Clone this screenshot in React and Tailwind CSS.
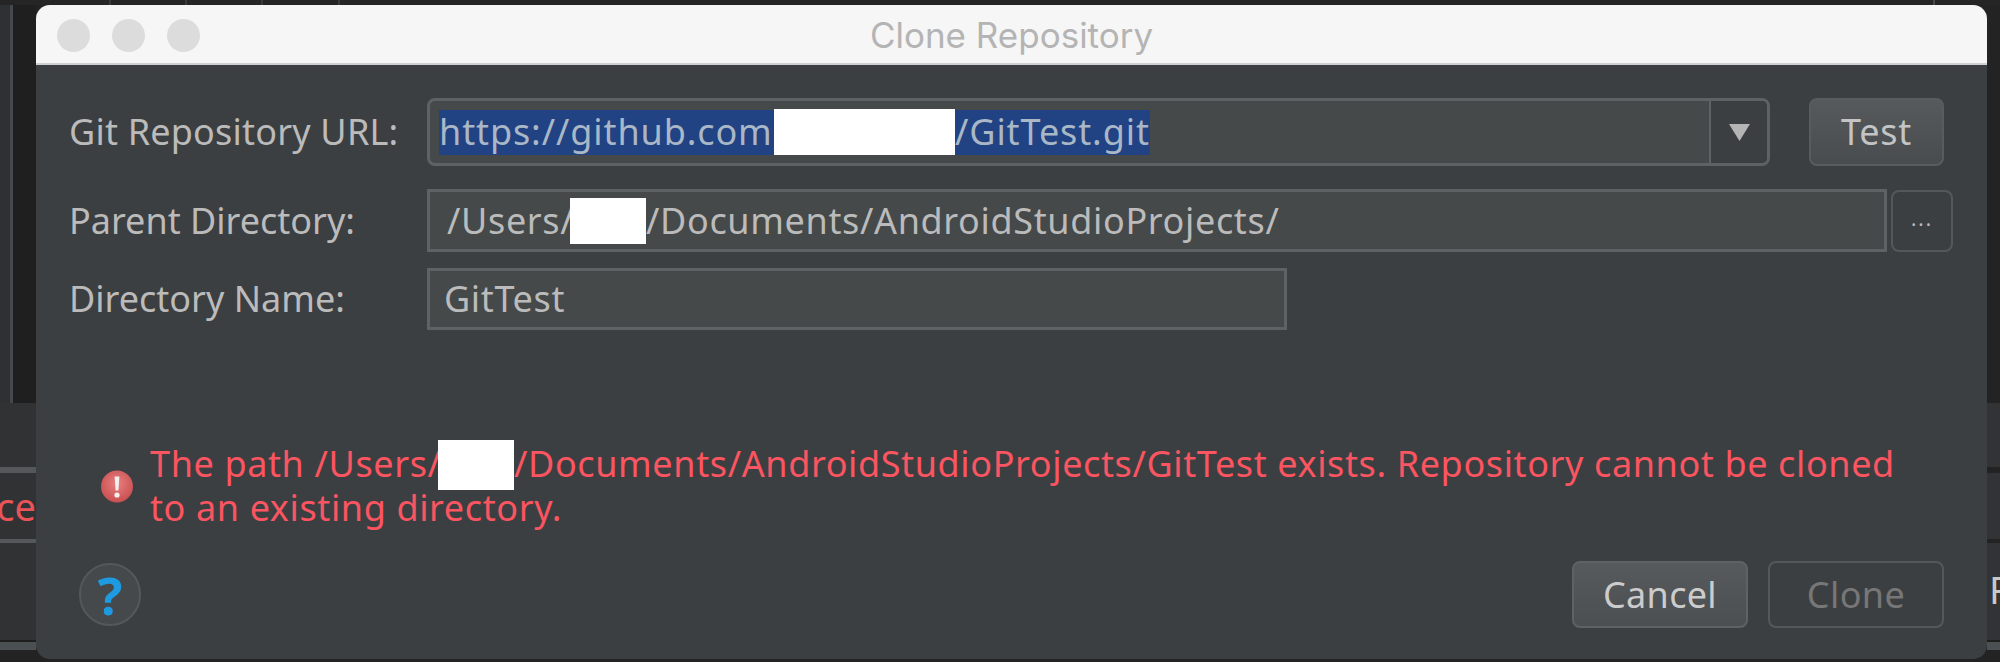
function Side({ left, right, className = "", leftClass = "", rightClass = "" }) {
  return (
    <div className={`flex justify-between shrink-0 ${className}`}>
      <div className={`w-[36px] overflow-hidden flex justify-end items-center ${leftClass}`}>{left}</div>
      <div className={`w-[13px] overflow-hidden flex items-center ${rightClass}`}>{right}</div>
    </div>
  );
}

function Button({ children, className = "" }) {
  return (
    <div className={`flex items-center justify-center rounded-[8px] border-2 ${className}`}>{children}</div>
  );
}

function Backdrop() {
  return (
    <div className="w-[2000px] h-[662px] flex flex-col bg-[#232323] font-['Noto_Sans',sans-serif] text-[38px]">
      <div className="h-[5px] shrink-0 bg-[#252525] flex">
        <div className="ml-[109px] w-[2px] bg-[#3a3a3a]" />
        <div className="ml-[74px] w-[2px] bg-[#3a3a3a]" />
        <div className="ml-[74px] w-[2px] bg-[#3a3a3a]" />
        <div className="ml-[75px] w-[2px] bg-[#3a3a3a]" />
        <div className="ml-[1593px] w-[2px] bg-[#444a4c]" />
      </div>
      <div className="h-[398px] shrink-0 flex justify-between">
        <div className="w-[36px] flex">
          <div className="w-[10px] bg-[#2f3032]" />
          <div className="w-[3px] bg-[#46494b]" />
          <div className="flex-1 bg-[#1f1f1f]" />
        </div>
        <div className="w-[13px] bg-[#232323]" />
      </div>
      <Side className="h-[64px]" leftClass="bg-[#303234]" rightClass="bg-[#313335]" />
      <Side className="h-[6px]" leftClass="bg-[#55585a]" rightClass="bg-[#232323]" />
      <Side className="h-[66px]" leftClass="bg-[#303234]" rightClass="bg-[#313335]" left={<span className="text-[#ea5358] whitespace-nowrap leading-none">oce</span>} />
      <Side className="h-[4px]" leftClass="bg-[#55585a]" rightClass="bg-[#232323]" />
      <Side className="h-[97px]" leftClass="bg-[#303234]" rightClass="bg-[#313335]" right={<span className="text-[#c8c8c8] leading-none pl-[2px] pb-[6px]">R</span>} />
      <Side className="h-[2px]" leftClass="bg-[#1e1e1e]" rightClass="bg-[#1e1e1e]" />
      <Side className="h-[8px]" leftClass="bg-[#4b5052]" rightClass="bg-[#4b5052]" />
      <div className="flex-1 bg-[#232323]" />
    </div>
  );
}

function ErrorIcon() {
  return (
    <svg width="32" height="33" viewBox="0 0 32 33" className="shrink-0">
      <defs>
        <radialGradient id="err" cx="50%" cy="40%" r="60%">
          <stop offset="0%" stopColor="#e88080" />
          <stop offset="100%" stopColor="#c94f50" />
        </radialGradient>
      </defs>
      <circle cx="16" cy="16.5" r="16" fill="url(#err)" />
      <path d="M13.6 6.5h4.8l-1 14h-2.8z" fill="#f4f0ee" />
      <circle cx="16" cy="25" r="2.6" fill="#f4f0ee" />
    </svg>
  );
}

export default function App() {
  return (
    <div className="relative w-[2000px] h-[662px] overflow-hidden">
      <Backdrop />
      <div className="absolute left-[36px] top-[5px] w-[1951px] h-[654px] rounded-[14px] overflow-hidden bg-[#3c3f41] flex flex-col font-['Noto_Sans',sans-serif] text-[36px] text-[#bbbbbb] whitespace-nowrap">
        <div className="relative h-[60px] shrink-0 bg-[#f6f6f6] border-b-2 border-[#cfcfcf] flex items-center justify-center font-['Inter',sans-serif] text-[35px] text-[#b4b4b4] pt-[3px]">
          <div className="absolute left-[21px] top-[14px] flex gap-[22px]">
            <div className="w-[33px] h-[33px] rounded-full bg-[#dcdcdc]" />
            <div className="w-[33px] h-[33px] rounded-full bg-[#dcdcdc]" />
            <div className="w-[33px] h-[33px] rounded-full bg-[#dcdcdc]" />
          </div>
          Clone Repository
        </div>

        <div className="mt-[33px] h-[68px] flex items-center pl-[33px] shrink-0">
          <div className="w-[358px] tracking-[0.2px]">Git Repository URL:</div>
          <div className="w-[1343px] h-full flex rounded-[8px] border-[3px] border-[#5f6264] bg-[#45494a] overflow-hidden">
            <div className="flex-1 flex items-center pl-[9px]">
              <div className="flex h-[45px] items-center bg-[#214283] text-[#a9b7c6] tracking-[0.9px]">
                <span className="w-[335px] overflow-hidden">https://github.com</span>
                <div className="w-[181px] h-[46px] bg-white" />
                <span className="w-[195px] overflow-hidden">/GitTest.git</span>
              </div>
            </div>
            <div className="w-[58px] border-l-2 border-[#5f6264] bg-[#3c3f41] flex items-center justify-center">
              <svg width="21" height="17" viewBox="0 0 21 17">
                <path d="M0 0h21L10.5 17z" fill="#b4b4b4" />
              </svg>
            </div>
          </div>
          <Button className="ml-[39px] w-[135px] h-full border-[#585c5e] bg-gradient-to-b from-[#565a5c] to-[#484c4e] text-[#c4c4c4] tracking-[0.8px]">Test</Button>
        </div>

        <div className="mt-[23px] h-[63px] flex items-center pl-[33px] shrink-0">
          <div className="w-[358px]">Parent Directory:</div>
          <div className="w-[1460px] h-full flex items-center pl-[17px] border-[3px] border-[#5f6264] bg-[#45494a] tracking-[0.65px]">
            <span className="w-[123px] overflow-hidden">/Users/</span>
            <div className="w-[76px] h-[46px] bg-white" />
            <span>/Documents/AndroidStudioProjects/</span>
          </div>
          <Button className="ml-[4px] w-[62px] h-[62px] border-[#55585a] bg-[#3c3f41] text-[20px] tracking-[2px] pb-[4px]">...</Button>
        </div>

        <div className="mt-[16px] h-[62px] flex items-center pl-[33px] shrink-0">
          <div className="w-[358px]">Directory Name:</div>
          <div className="w-[860px] h-full flex items-center pl-[14px] border-[3px] border-[#5f6264] bg-[#45494a] tracking-[0.65px]">GitTest</div>
        </div>

        <div className="mt-[112px] flex items-center pl-[65px] text-[#fa5560] tracking-[0.62px] leading-[44px] shrink-0">
          <ErrorIcon />
          <div className="ml-[17px] flex flex-col">
            <div className="h-[44px] flex items-center">
              <span className="w-[288px] overflow-hidden">The path /Users/</span>
              <div className="w-[76px] h-[50px] mt-[2px] bg-white" />
              <span>/Documents/AndroidStudioProjects/GitTest exists. Repository cannot be cloned</span>
            </div>
            <div className="h-[44px] flex items-center">to an existing directory.</div>
          </div>
        </div>

        <div className="mt-[31px] h-[67px] flex items-center pl-[43px] pr-[43px] shrink-0">
          <div className="w-[62px] h-[63px] rounded-full border-2 border-[#55585a] bg-[#45494b] flex items-center justify-center text-[#1e9be0] text-[52px] font-bold leading-none">?</div>
          <Button className="ml-auto w-[176px] h-full border-[#5e6264] bg-gradient-to-b from-[#565a5c] to-[#4b4f51] text-[#cccccc] tracking-[0.3px]">Cancel</Button>
          <Button className="ml-[20px] w-[176px] h-full border-[#55585a] bg-[#3c3f41] text-[#777777] tracking-[0.4px]">Clone</Button>
        </div>
      </div>
    </div>
  );
}
